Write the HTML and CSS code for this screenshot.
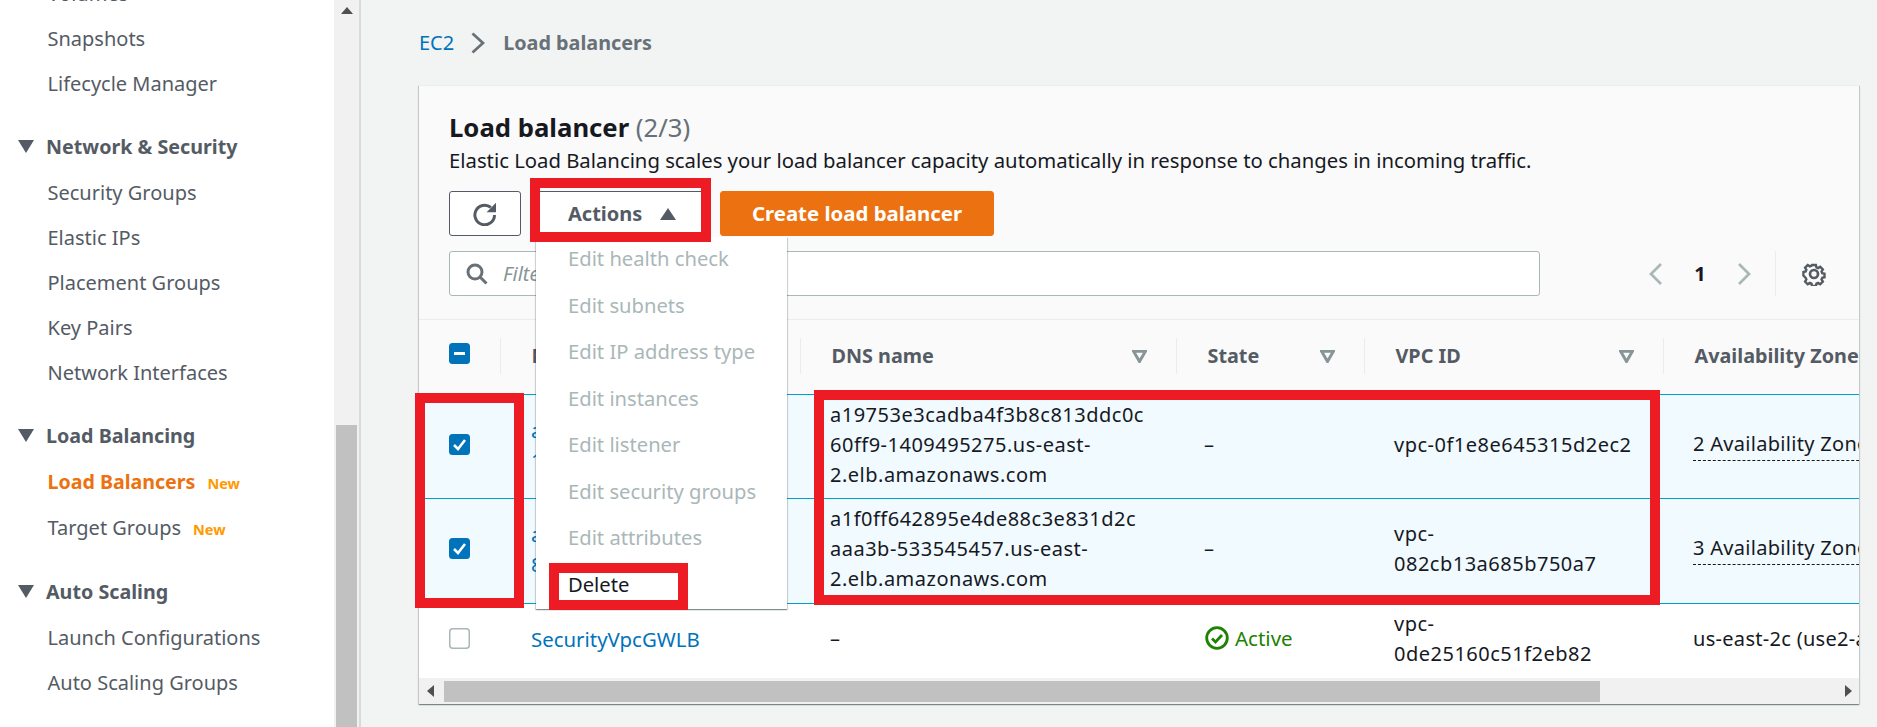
FILE: index.html
```html
<!DOCTYPE html>
<html lang="en">
<head>
<meta charset="utf-8">
<title>Load balancers</title>
<link rel="stylesheet" href="styles.css">
</head>
<body>
<div class="page">
  <aside class="sidebar">
    <nav class="nav">
      <ul class="nav-list">
        <li class="nav-item">Volumes</li>
        <li class="nav-item">Snapshots</li>
        <li class="nav-item">Lifecycle Manager</li>
      </ul>
      <div class="nav-head"><svg class="nav-caret" viewBox="0 0 16 13"><path d="M0 0h16L8 13z"/></svg>Network &amp; Security</div>
      <ul class="nav-list">
        <li class="nav-item">Security Groups</li>
        <li class="nav-item">Elastic IPs</li>
        <li class="nav-item">Placement Groups</li>
        <li class="nav-item">Key Pairs</li>
        <li class="nav-item">Network Interfaces</li>
      </ul>
      <div class="nav-head"><svg class="nav-caret" viewBox="0 0 16 13"><path d="M0 0h16L8 13z"/></svg>Load Balancing</div>
      <ul class="nav-list">
        <li class="nav-item nav-item-active">Load Balancers<span class="nav-new">New</span></li>
        <li class="nav-item nav-item-tall">Target Groups<span class="nav-new">New</span></li>
      </ul>
      <div class="nav-head"><svg class="nav-caret" viewBox="0 0 16 13"><path d="M0 0h16L8 13z"/></svg>Auto Scaling</div>
      <ul class="nav-list">
        <li class="nav-item">Launch Configurations</li>
        <li class="nav-item">Auto Scaling Groups</li>
      </ul>
    </nav>
  </aside>
  <div class="side-scroll">
    <svg class="side-scroll-up" viewBox="0 0 12 7"><path d="M0 7h12L6 0z"/></svg>
    <div class="side-scroll-thumb"></div>
  </div>

  <main class="main">
    <div class="crumbs">
      <a class="crumb-link">EC2</a>
      <svg class="crumb-sep" viewBox="0 0 14 22"><path d="M1.5 1.5 12 11 1.5 20.5"/></svg>
      <span class="crumb-current">Load balancers</span>
    </div>

    <section class="card">
      <header class="card-head">
        <h1 class="card-title">Load balancer <span class="card-count">(2/3)</span></h1>
        <p class="card-desc">Elastic Load Balancing scales your load balancer capacity automatically in response to changes in incoming traffic.</p>
        <div class="toolbar">
          <button class="btn btn-icon">
            <svg class="refresh" viewBox="0 0 24 24"><path d="M21.5 13a9.8 9.8 0 1 1-3.6-7.6"/><path class="refresh-head" d="M23 .8v9.4h-9.4z"/></svg>
          </button>
          <div class="actions">
            <button class="btn btn-actions">Actions<svg class="actions-caret" viewBox="0 0 16 12"><path d="M0 12h16L8 0z"/></svg></button>
            <ul class="menu">
              <li class="menu-item">Edit health check</li>
              <li class="menu-item">Edit subnets</li>
              <li class="menu-item">Edit IP address type</li>
              <li class="menu-item">Edit instances</li>
              <li class="menu-item">Edit listener</li>
              <li class="menu-item">Edit security groups</li>
              <li class="menu-item">Edit attributes</li>
              <li class="menu-item menu-item-on">Delete</li>
            </ul>
          </div>
          <button class="btn btn-primary">Create load balancer</button>
        </div>
        <div class="filter-row">
          <div class="search">
            <svg class="search-icon" viewBox="0 0 22 22"><circle cx="9" cy="9" r="7"/><path d="M14 14l6.5 6.5"/></svg>
            <span class="search-hint">Filter load balancers</span>
          </div>
          <div class="pager">
            <svg class="pager-arrow" viewBox="0 0 13 22"><path d="M12 1 2 11l10 10"/></svg>
            <span class="pager-num">1</span>
            <svg class="pager-arrow pager-next" viewBox="0 0 13 22"><path d="M1 1l10 10L1 21"/></svg>
            <span class="pager-rule"></span>
            <svg class="gear" viewBox="0 0 24 24"><path d="M9.8 2h4.4l.6 2.8 1.9.8 2.4-1.5 3 3-1.5 2.4.8 1.9 2.6.6v4l-2.6.6-.8 1.9 1.5 2.4-3 3-2.4-1.5-1.9.8-.6 2.6H9.8l-.6-2.6-1.9-.8-2.4 1.5-3-3 1.5-2.4-.8-1.9L0 14v-4l2.6-.6.8-1.9-1.5-2.4 3-3 2.4 1.5 1.9-.8z" transform="translate(1.4 1.2) scale(.88)"/><circle cx="12" cy="12" r="4"/></svg>
          </div>
        </div>
      </header>

      <div class="table-wrap">
        <table class="table">
          <colgroup>
            <col class="col-check"><col class="col-name"><col class="col-dns"><col class="col-state"><col class="col-vpc"><col class="col-az">
          </colgroup>
          <thead>
            <tr>
              <th class="th-check"><svg class="check check-head" viewBox="0 0 21 21"><rect width="21" height="21" rx="3.5" fill="#0073bb"/><path d="M5 10.5h11" stroke="#fff" stroke-width="3"/></svg></th>
              <th><div class="th-in"><span class="th-text">Name</span><svg class="sort" viewBox="0 0 15 13"><path d="M1.5 1.2h12L7.5 11.5z"/></svg></div></th>
              <th><div class="th-in"><span class="th-text">DNS name</span><svg class="sort" viewBox="0 0 15 13"><path d="M1.5 1.2h12L7.5 11.5z"/></svg></div></th>
              <th><div class="th-in"><span class="th-text">State</span><svg class="sort" viewBox="0 0 15 13"><path d="M1.5 1.2h12L7.5 11.5z"/></svg></div></th>
              <th><div class="th-in"><span class="th-text">VPC ID</span><svg class="sort" viewBox="0 0 15 13"><path d="M1.5 1.2h12L7.5 11.5z"/></svg></div></th>
              <th><div class="th-in"><span class="th-text">Availability Zones</span></div></th>
            </tr>
          </thead>
          <tbody>
            <tr class="row row-sel row-first">
              <td class="td-check"><svg class="check" viewBox="0 0 21 21"><rect width="21" height="21" rx="3.5" fill="#0073bb"/><path d="M5 11l4 4 7-9" fill="none" stroke="#fff" stroke-width="2.6"/></svg></td>
              <td class="td-name"><a class="link">a19753e3cadba4f3<br>1409495275</a></td>
              <td class="td-mono">a19753e3cadba4f3b8c813ddc0c<br>60ff9-1409495275.us-east-<br>2.elb.amazonaws.com</td>
              <td class="td-state">–</td>
              <td class="td-mono">vpc-0f1e8e645315d2ec2</td>
              <td class="td-az"><span class="az-tip">2 Availability Zones</span></td>
            </tr>
            <tr class="row row-sel row-second">
              <td class="td-check"><svg class="check" viewBox="0 0 21 21"><rect width="21" height="21" rx="3.5" fill="#0073bb"/><path d="M5 11l4 4 7-9" fill="none" stroke="#fff" stroke-width="2.6"/></svg></td>
              <td class="td-name"><a class="link">a1f0ff642895e4de<br>88c3e831d2c</a></td>
              <td class="td-mono">a1f0ff642895e4de88c3e831d2c<br>aaa3b-533545457.us-east-<br>2.elb.amazonaws.com</td>
              <td class="td-state">–</td>
              <td class="td-mono">vpc-<br>082cb13a685b750a7</td>
              <td class="td-az"><span class="az-tip">3 Availability Zones</span></td>
            </tr>
            <tr class="row row-third">
              <td class="td-check"><svg class="check" viewBox="0 0 21 21"><rect x=".75" y=".75" width="19.5" height="19.5" rx="3" fill="#fff" stroke="#aab7b8" stroke-width="1.5"/></svg></td>
              <td class="td-name"><a class="link">SecurityVpcGWLB</a></td>
              <td class="td-mono">–</td>
              <td class="td-state"><span class="status"><svg class="status-icon" viewBox="0 0 24 24"><circle cx="12" cy="12" r="10.3"/><path d="M7 12.5l3.5 3.5 6.5-7"/></svg>Active</span></td>
              <td class="td-mono">vpc-<br>0de25160c51f2eb82</td>
              <td class="td-az">us-east-2c (use2-az3)</td>
            </tr>
          </tbody>
        </table>
      </div>
      <div class="h-scroll">
        <svg class="h-arrow" viewBox="0 0 7 12"><path d="M7 0v12L0 6z"/></svg>
        <div class="h-thumb"></div>
        <svg class="h-arrow" viewBox="0 0 7 12"><path d="M0 0v12l7-6z"/></svg>
      </div>
    </section>
  </main>

  <div class="mark mark-actions"></div>
  <div class="mark mark-checks"></div>
  <div class="mark mark-dns"></div>
  <div class="mark mark-delete"></div>
</div>
</body>
</html>
```
FILE: styles.css
```css
* { box-sizing: border-box; }
html, body { margin: 0; padding: 0; }
body {
  font-family: "Noto Sans", "Open Sans", sans-serif;
  font-size: 20px;
  color: #16191f;
  background: #f2f3f3;
}
.page {
  position: relative;
  display: flex;
  width: 1877px;
  height: 727px;
  overflow: hidden;
}

/* sidebar */
.sidebar {
  width: 334px;
  flex: none;
  background: #fff;
  overflow: hidden;
}
.nav { margin-top: -29px; color: #545b64; }
.nav-list { list-style: none; margin: 0; padding: 0; }
.nav-item {
  height: 45px;
  line-height: 45px;
  padding-left: 47.5px;
  white-space: nowrap;
}
.nav-item-active { color: #ec7211; font-weight: 700; font-size: 19.6px; height: 46px; }
.nav-item-tall { height: 46px; }
.nav-new {
  margin-left: 12px;
  font-size: 14.5px;
  font-weight: 700;
  color: #ff9900;
}
.nav-head {
  display: flex;
  align-items: center;
  height: 45px;
  margin: 18px 0 1px;
  padding-left: 18px;
  font-size: 19.7px;
  font-weight: 700;
}
.nav-caret { width: 16px; height: 13px; margin-right: 12px; fill: #545b64; }

.side-scroll {
  position: relative;
  width: 27px;
  flex: none;
  background: #f1f1f1;
  border-right: 2px solid #d5dbdb;
}
.side-scroll-up {
  display: block;
  width: 12px;
  height: 7px;
  margin: 7px 0 0 7px;
  fill: #505050;
}
.side-scroll-thumb {
  width: 21px;
  height: 302px;
  margin: 411px 0 0 2px;
  background: #c1c1c1;
}

/* main */
.main {
  flex: 1;
  min-width: 0;
  padding: 0 18px 0 58px;
}
.crumbs {
  display: flex;
  align-items: center;
  height: 85px;
}
.crumb-link { color: #0073bb; }
.crumb-sep {
  width: 14px;
  height: 22px;
  margin: 0 18px 0 17px;
  fill: none;
  stroke: #687078;
  stroke-width: 2.7;
}
.crumb-current { color: #687078; font-weight: 700; font-size: 19.8px; }

.card {
  background: #fff;
  box-shadow: 0 1px 1px 0 rgba(0,28,36,.3), 1px 1px 1px 0 rgba(0,28,36,.15), -1px 1px 1px 0 rgba(0,28,36,.15);
  border-top: 1px solid #eaeded;
}
.card-head {
  padding: 22px 33px 23px 30px;
  background: #fafafa;
  border-bottom: 1px solid #eaeded;
}
.card-title {
  margin: 0;
  font-size: 25.7px;
  line-height: 40px;
  font-weight: 700;
}
.card-count { color: #687078; font-weight: 400; }
.card-desc {
  margin: 0 0 19px;
  line-height: 24px;
  font-size: 20.3px;
  white-space: nowrap;
}

.toolbar { display: flex; gap: 14px; height: 45px; }
.btn {
  font: inherit;
  height: 45px;
  border-radius: 3px;
  padding: 0;
  background: #fff;
  border: 1px solid #545b64;
  color: #545b64;
}
.btn-icon {
  width: 72px;
  display: flex;
  align-items: center;
  justify-content: center;
}
.refresh {
  width: 24px;
  height: 24px;
  fill: none;
  stroke: #545b64;
  stroke-width: 3;
}
.refresh-head { fill: #545b64; stroke: none; }
.actions { position: relative; }
.btn-actions {
  display: flex;
  align-items: center;
  width: 171px;
  padding-left: 32px;
  font-weight: 700;
}
.actions-caret { width: 16px; height: 12px; margin-left: 18px; fill: #545b64; }
.btn-primary {
  width: 274px;
  background: #ec7211;
  border-color: #ec7211;
  color: #fff;
  font-size: 20.4px;
  font-weight: 700;
  line-height: 41px;
}
.menu {
  position: absolute;
  z-index: 5;
  top: 46px;
  left: 1px;
  width: 251px;
  margin: 0;
  padding: 0;
  list-style: none;
  background: #fff;
  font-size: 20.2px;
  box-shadow: 0 1px 1px 0 rgba(0,28,36,.3), 1px 1px 1px 0 rgba(0,28,36,.15), -1px 1px 1px 0 rgba(0,28,36,.15);
}
.menu-item {
  height: 46.5px;
  line-height: 43.5px;
  padding-left: 32px;
  color: #aab7b8;
}
.menu-item-on { color: #16191f; }

.filter-row { display: flex; align-items: center; margin-top: 15px; }
.search {
  flex: 1;
  height: 45px;
  display: flex;
  align-items: center;
  padding-left: 16px;
  background: #fff;
  border: 1px solid #aab7b8;
  border-radius: 3px;
}
.search-icon {
  width: 22px;
  height: 22px;
  fill: none;
  stroke: #687078;
  stroke-width: 3;
}
.search-hint { margin-left: 15px; color: #879596; font-style: italic; }
.pager { display: flex; align-items: center; margin-left: 109px; height: 45px; }
.pager-arrow {
  width: 13px;
  height: 22px;
  fill: none;
  stroke: #aab7b8;
  stroke-width: 2.7;
}
.pager-num { width: 12px; margin-left: 32px; text-align: center; font-weight: 700; }
.pager-next { margin-left: 32px; }
.pager-rule { width: 1px; height: 45px; margin-left: 24px; background: #eaeded; }
.gear {
  width: 24px;
  height: 24px;
  margin-left: 26px;
  fill: none;
  stroke: #545b64;
  stroke-width: 2.7;
}

/* table */
.table-wrap { overflow: hidden; background: #fff; }
.table {
  width: 1444px;
  table-layout: fixed;
  border-collapse: separate;
  border-spacing: 0;
}
.col-check { width: 81px; }
.col-name { width: 300px; }
.col-dns { width: 376px; }
.col-state { width: 188px; }
.col-vpc { width: 299px; }
.col-az { width: 200px; }
.table th {
  height: 74px;
  padding: 0;
  background: #fafafa;
  color: #545b64;
  font-size: 19.8px;
  font-weight: 700;
  text-align: left;
}
.th-in {
  display: flex;
  align-items: center;
  justify-content: space-between;
  height: 36px;
  margin-bottom: 2px;
  padding: 0 29px 0 30.5px;
  border-left: 1px solid #eaeded;
  white-space: nowrap;
}
.th-text { margin-bottom: 2px; }
.sort {
  width: 15px;
  height: 13px;
  flex: none;
  fill: none;
  stroke: #879596;
  stroke-width: 3;
}
.check { display: block; width: 21px; height: 21px; margin-bottom: 5px; }
.check-head { margin-bottom: 7px; }
.table th.th-check { padding-left: 30px; }
.table td {
  padding: 0 0 3px 30px;
  line-height: 30px;
  vertical-align: middle;
  white-space: nowrap;
}
.table td.td-check { padding-left: 30px; padding-bottom: 0; }
.table td.td-name { padding-left: 31px; font-size: 20.4px; }
.table td.td-state { padding-left: 28px; }
.table td.td-mono { letter-spacing: .5px; }
.table td.td-az { letter-spacing: .3px; }
.row-sel td {
  background: #f1faff;
  border-bottom: 1px solid #00a1c9;
}
.row-first td { border-top: 1px solid #00a1c9; height: 105px; }
.row-second td { height: 105px; padding-bottom: 5px; }
.row-third td { height: 74px; padding-bottom: 4px; }
.link { color: #0073bb; }
.az-tip {
  display: inline-block;
  line-height: 24px;
  padding-bottom: 4px;
  border-bottom: 1px dashed #16191f;
}
.status { display: inline-flex; align-items: center; margin: 3px 0 0 1px; color: #1d8102; font-size: 20.5px; }
.status-icon {
  width: 24px;
  height: 24px;
  margin-right: 6px;
  fill: none;
  stroke: #1d8102;
  stroke-width: 2.8;
}

.h-scroll {
  display: flex;
  align-items: center;
  height: 26px;
  padding: 0 7px 0 8px;
  background: #f1f1f1;
}
.h-arrow { width: 7px; height: 12px; fill: #505050; flex: none; }
.h-thumb { width: 1156px; height: 21px; margin: 0 auto 0 10px; background: #c1c1c1; }

/* annotation frames drawn over the screenshot */
.mark {
  position: absolute;
  z-index: 10;
  border: 10px solid #ed1c24;
}
.mark-actions { left: 530px; top: 178px; width: 181px; height: 64px; }
.mark-checks { left: 415px; top: 393px; width: 109px; height: 215px; }
.mark-dns { left: 814px; top: 390px; width: 846px; height: 215px; }
.mark-delete { left: 549px; top: 563px; width: 139px; height: 47px; }
```
